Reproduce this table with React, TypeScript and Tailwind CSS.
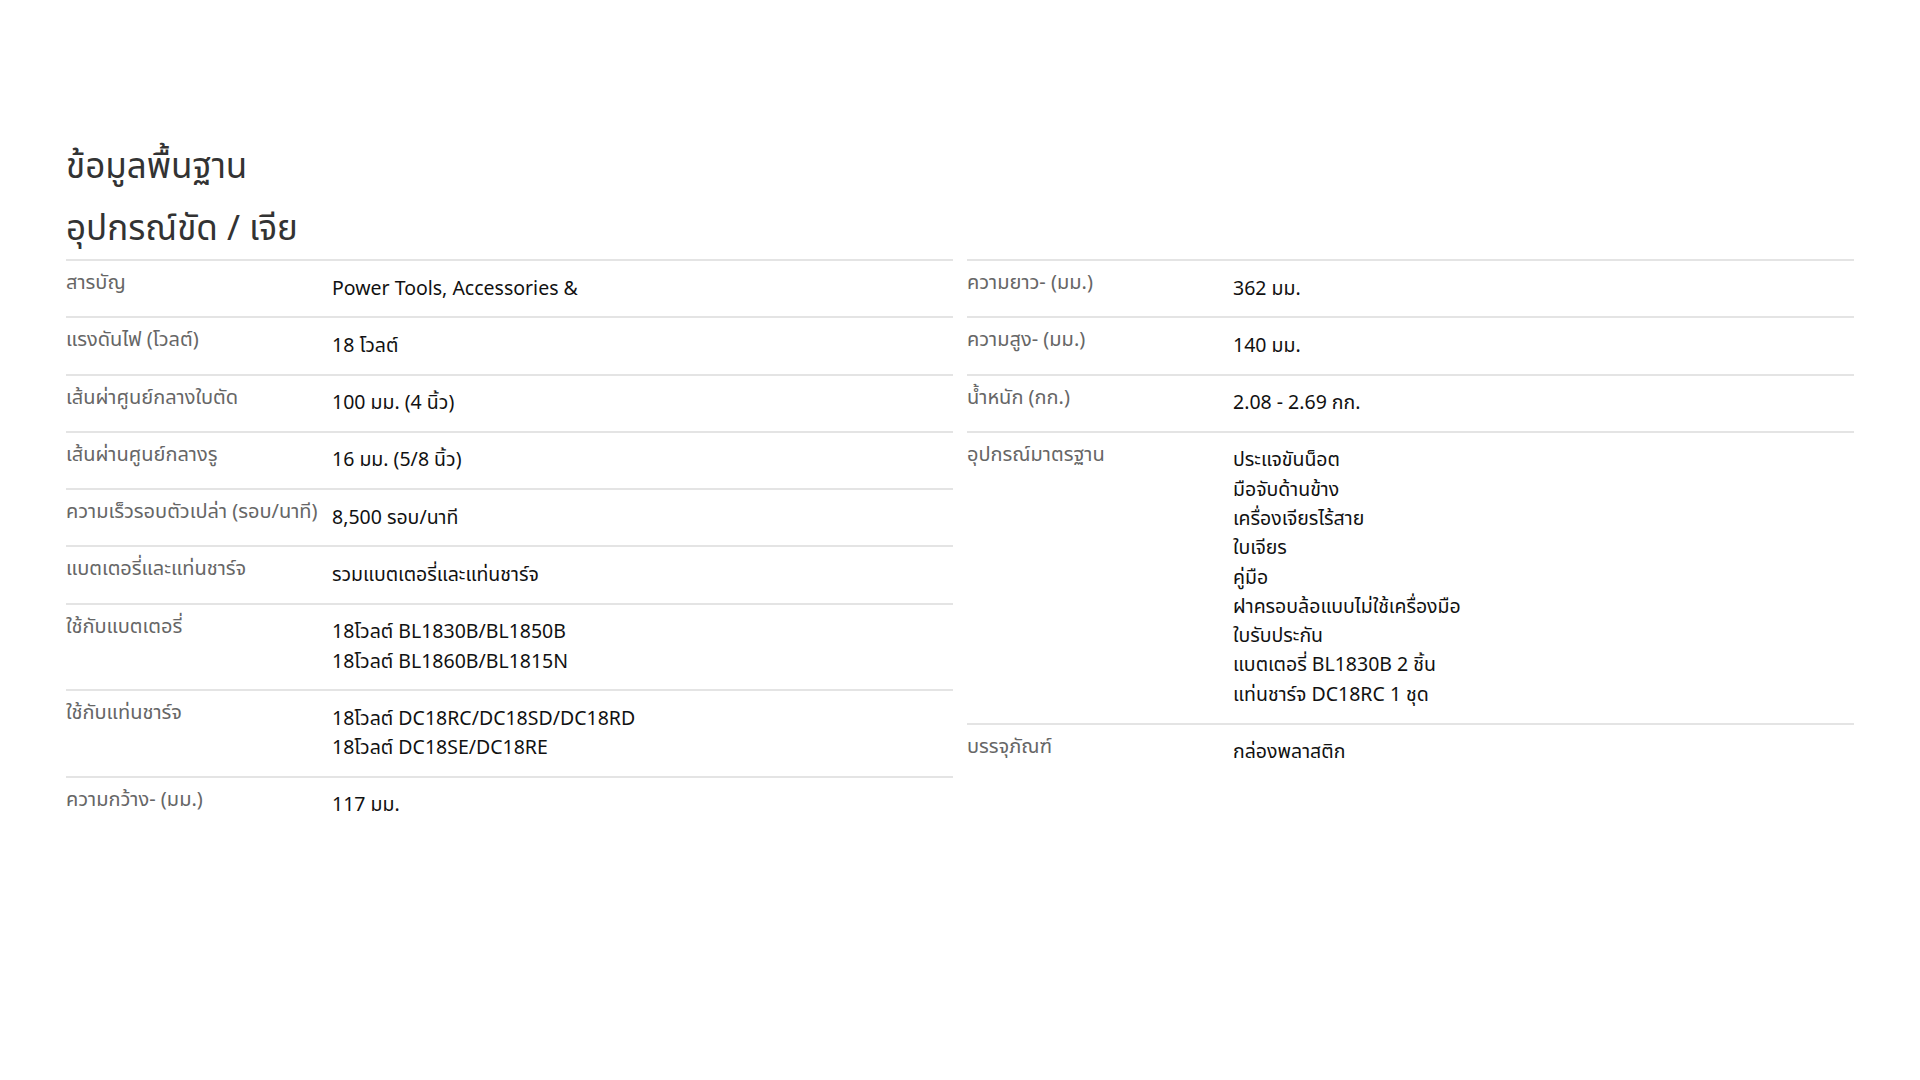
type Spec = { label: string; values: string[] };

const leftSpecs: Spec[] = [
  { label: 'สารบัญ', values: ['Power Tools, Accessories &'] },
  { label: 'แรงดันไฟ (โวลต์)', values: ['18 โวลต์'] },
  { label: 'เส้นผ่าศูนย์กลางใบตัด', values: ['100 มม. (4 นิ้ว)'] },
  { label: 'เส้นผ่านศูนย์กลางรู', values: ['16 มม. (5/8 นิ้ว)'] },
  { label: 'ความเร็วรอบตัวเปล่า (รอบ/นาที)', values: ['8,500 รอบ/นาที'] },
  { label: 'แบตเตอรี่และแท่นชาร์จ', values: ['รวมแบตเตอรี่และแท่นชาร์จ'] },
  { label: 'ใช้กับแบตเตอรี่', values: ['18โวลต์ BL1830B/BL1850B', '18โวลต์ BL1860B/BL1815N'] },
  { label: 'ใช้กับแท่นชาร์จ', values: ['18โวลต์ DC18RC/DC18SD/DC18RD', '18โวลต์ DC18SE/DC18RE'] },
  { label: 'ความกว้าง- (มม.)', values: ['117 มม.'] },
];

const rightSpecs: Spec[] = [
  { label: 'ความยาว- (มม.)', values: ['362 มม.'] },
  { label: 'ความสูง- (มม.)', values: ['140 มม.'] },
  { label: 'น้ำหนัก (กก.)', values: ['2.08 - 2.69 กก.'] },
  {
    label: 'อุปกรณ์มาตรฐาน',
    values: [
      'ประแจขันน็อต',
      'มือจับด้านข้าง',
      'เครื่องเจียรไร้สาย',
      'ใบเจียร',
      'คู่มือ',
      'ฝาครอบล้อแบบไม่ใช้เครื่องมือ',
      'ใบรับประกัน',
      'แบตเตอรี่ BL1830B 2 ชิ้น',
      'แท่นชาร์จ DC18RC 1 ชุด',
    ],
  },
  { label: 'บรรจุภัณฑ์', values: ['กล่องพลาสติก'] },
];

function SpecTable({ specs }: { specs: Spec[] }) {
  return (
    <div className="flex flex-col">
      {specs.map((s) => (
        <div key={s.label} className="flex border-t-2 border-[#e4e4e4] pt-[9px] pb-[12.5px]">
          <div className="w-[266px] shrink-0 text-[20px] leading-[26px] text-[#666666]">{s.label}</div>
          <div className="flex-1 pt-[4.5px] text-[19.5px] leading-[29.3px] text-[#111111]">
            {s.values.map((v) => (
              <div key={v}>{v}</div>
            ))}
          </div>
        </div>
      ))}
    </div>
  );
}

export default function App() {
  return (
    <div
      className="min-h-screen bg-white px-[66px] pt-[146px]"
      style={{ fontFamily: '"Noto Sans Thai", "Noto Sans", sans-serif' }}
    >
      <h2 className="text-[35px] leading-[44px] text-[#333333]">ข้อมูลพื้นฐาน</h2>
      <h3 className="mt-[18px] text-[35px] leading-[44px] text-[#333333]">อุปกรณ์ขัด / เจีย</h3>
      <div className="mt-[7px] grid grid-cols-2 gap-x-[14px]">
        <SpecTable specs={leftSpecs} />
        <SpecTable specs={rightSpecs} />
      </div>
    </div>
  );
}
